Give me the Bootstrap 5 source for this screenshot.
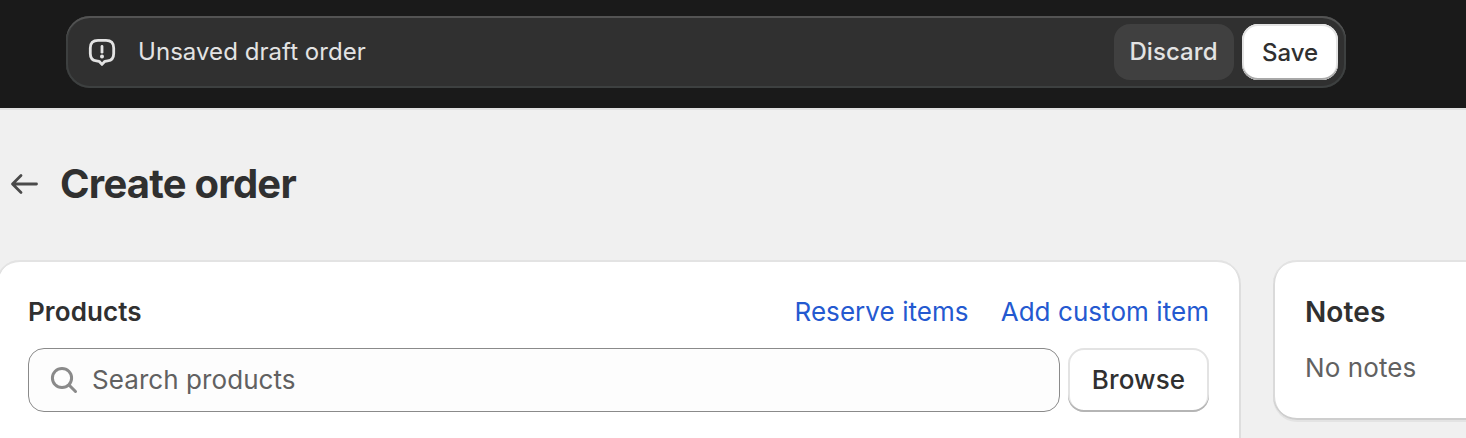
<!DOCTYPE html>
<html lang="en">
<head>
<meta charset="utf-8">
<meta name="viewport" content="width=device-width, initial-scale=1">
<title>Create order</title>
<link href="https://cdn.jsdelivr.net/npm/bootstrap@5.3.0/dist/css/bootstrap.min.css" rel="stylesheet">
<style>
body{font-family:Inter,sans-serif;font-size:26px;line-height:40px;color:#303030;background:#f0f0f0;height:438px;overflow:hidden}
.topbar{height:110px;background:#1a1a1a;border-bottom:2px solid #e1e1e1;padding:16px 120px 20px 66px}
.savebar{height:72px;border-radius:24px;background:#303030;box-shadow:inset 0 2px 0 #535353,inset 0 0 0 2px #3d4040;padding:8px 8px 8px 20px;color:#e3e3e3}
.savebar-text{font-size:24px;margin-left:20px;letter-spacing:.05px}
.savebar .btn{height:56px;font-size:24px;line-height:24px;font-weight:500;border:0;border-radius:16px;padding:0}
.savebar .btn-discard{width:120px;background:#404040;color:#e3e3e3;letter-spacing:.06px;padding-right:1px}
.savebar .btn-save{width:96px;background:#fff;color:#303030;padding-top:2px;box-shadow:inset 0 -2px 0 #a8a8a8,inset 0 0 0 2px #e3e3e3}
.page-head{height:150px;padding-left:8px;padding-bottom:2px}
.page-title{font-size:40px;font-weight:700;line-height:48px;letter-spacing:-.76px;margin-left:20px}
.panels{height:178px;gap:32px;margin-left:-4px;overflow:hidden}
.panel{background:#fff;border-radius:24px}
.panel-products{width:1245px;height:230px;padding:32px 32px 0 32px;box-shadow:inset 0 2px 0 #e3e3e3,inset -2px 0 0 #dedede,inset 2px 0 0 #dedede}
.panel-notes{width:286px;height:160px;padding:32px 32px 0 32px;box-shadow:inset 0 2px 0 #e3e3e3,inset 0 -2px 0 #cecece,inset 2px 0 0 #dadada,0 2px 0 #e3e3e3}
.panel h2{font-size:26px;font-weight:600;line-height:40px;letter-spacing:.1px}
.panel-notes h2{font-size:28px}
.panel a{color:#2459d0;letter-spacing:.06px}
.links{gap:32px}
.search{height:64px;border:1px solid #8a8a8a;border-radius:16px;background:#fdfdfd;color:#616161;padding-left:15px}
.search-text{letter-spacing:.07px}
.btn-browse{width:141px;height:64px;font-size:26px;line-height:38px;font-weight:550;letter-spacing:.1px;border:0;border-radius:16px;padding:0;color:#303030;background:#fff;box-shadow:inset 0 -2px 0 #b5b5b5,inset 0 0 0 2px #e3e3e3}
.muted{color:#616161;letter-spacing:.1px}
</style>
</head>
<body>
<header class="topbar">
  <div class="savebar d-flex align-items-center">
    <svg width="32" height="32" viewBox="0 0 32 32" fill="none" stroke="#e3e3e3" stroke-width="2.8" stroke-linecap="round" stroke-linejoin="round">
      <path d="M12 4.400h8q7.700 0 7.700 7.700v5.300q0 6.600-6 7.400l-2.800.5L16 28.400l-2.900-3.100-2.800-.5q-6-.8-6-7.400v-5.300q0-7.700 7.700-7.700Z"/>
      <path d="M16 10.400v5.800"/><circle cx="16" cy="20.500" r="2" fill="#e3e3e3" stroke="none"/>
    </svg>
    <span class="savebar-text">Unsaved draft order</span>
    <div class="d-flex gap-2 ms-auto">
      <button class="btn btn-discard" type="button">Discard</button>
      <button class="btn btn-save" type="button">Save</button>
    </div>
  </div>
</header>
<main>
  <div class="page-head d-flex align-items-center">
    <svg width="32" height="32" viewBox="0 0 32 32" fill="none" stroke="#4a4a4a" stroke-width="2.800" stroke-linecap="round" stroke-linejoin="round"><path d="M28.500 16H5M13 7.500 4.500 16l8.500 8.500"/></svg>
    <h1 class="page-title mb-0">Create order</h1>
  </div>
  <div class="panels d-flex align-items-start">
    <section class="panel panel-products flex-shrink-0">
      <div class="d-flex justify-content-between align-items-center">
        <h2 class="mb-0">Products</h2>
        <div class="links d-flex">
          <a class="text-decoration-none" href="#">Reserve items</a>
          <a class="text-decoration-none" href="#">Add custom item</a>
        </div>
      </div>
      <div class="d-flex gap-2 mt-3">
        <div class="search d-flex align-items-center flex-grow-1">
          <svg width="40" height="40" viewBox="0 0 40 40" fill="none" stroke="#8a8a8a" stroke-width="3" stroke-linecap="round"><circle cx="18" cy="18" r="9.600"/><path d="m25 25 6.500 6.500"/></svg>
          <span class="search-text ms-2">Search products</span>
        </div>
        <button class="btn btn-browse" type="button">Browse</button>
      </div>
    </section>
    <section class="panel panel-notes flex-grow-1 rounded-end-0">
      <h2 class="mb-3">Notes</h2>
      <p class="muted mb-0">No notes</p>
    </section>
  </div>
</main>
<script src="https://cdn.jsdelivr.net/npm/bootstrap@5.3.0/dist/js/bootstrap.bundle.min.js"></script>
</body>
</html>
